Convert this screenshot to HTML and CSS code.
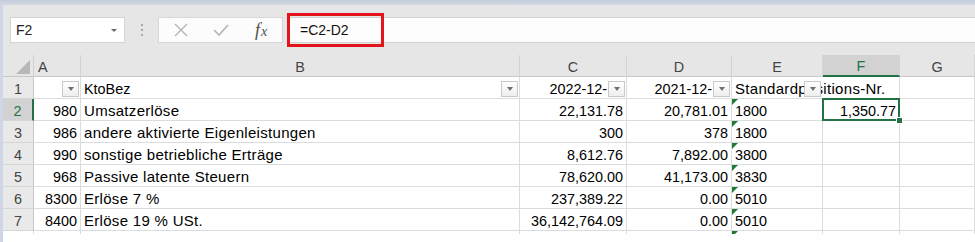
FILE: index.html
```html
<!DOCTYPE html>
<html lang="de">
<head>
    <meta charset="UTF-8">
    <title>Excel – Tabelle</title>
    <link rel="stylesheet" href="styles.css">
</head>
<body>
    <div class="app">
        <div class="top-strip"></div>
        <div class="main">
            <!-- Bearbeitungsleiste -->
            <div class="formula-row">
                <div class="name-box">
                    <span>F2</span>
                    <span class="caret"></span>
                </div>
                <div class="grip"><i></i><i></i><i></i></div>
                <div class="fx-buttons">
                    <svg class="btn-icon" width="16" height="16" viewBox="0 0 16 16">
                        <path d="M2 2 L14 14 M14 2 L2 14" stroke="#b4b4b4" stroke-width="1.4" fill="none"/>
                    </svg>
                    <svg class="btn-icon" width="16" height="16" viewBox="0 0 16 16">
                        <path d="M1 8 L6 13 L15 3" stroke="#b4b4b4" stroke-width="1.6" fill="none"/>
                    </svg>
                    <span class="fx"><i>f</i><i class="fx-x">x</i></span>
                </div>
                <div class="formula-input">
                    <span class="formula-text">=C2-D2</span>
                    <div class="highlight"></div>
                </div>
            </div>

            <!-- Tabellenblatt -->
            <div class="sheet">
                <div class="corner"><div class="corner-tri"></div></div>
                <div class="col-head col-a">A</div>
                <div class="col-head">B</div>
                <div class="col-head">C</div>
                <div class="col-head">D</div>
                <div class="col-head">E</div>
                <div class="col-head selected">F</div>
                <div class="col-head">G</div>

                <div class="row-head">1</div>
                <div class="c filter"><span class="drop"></span></div>
                <div class="c filter">KtoBez<span class="drop"></span></div>
                <div class="c filter r"><span class="clip">2022-12-</span><span class="drop"></span></div>
                <div class="c filter r"><span class="clip">2021-12-</span><span class="drop"></span></div>
                <div class="c filter spill txt">Standardpositions-Nr.<span class="drop"></span></div>
                <div class="c"></div>
                <div class="c"></div>

                <div class="row-head selected">2</div>
                <div class="c r">980</div>
                <div class="c txt">Umsatzerlöse</div>
                <div class="c r">22,131.78</div>
                <div class="c r">20,781.01</div>
                <div class="c flag">1800</div>
                <div class="c r active">1,350.77</div>
                <div class="c"></div>

                <div class="row-head">3</div>
                <div class="c r">986</div>
                <div class="c txt">andere aktivierte Eigenleistungen</div>
                <div class="c r">300</div>
                <div class="c r">378</div>
                <div class="c flag">1800</div>
                <div class="c"></div>
                <div class="c"></div>

                <div class="row-head">4</div>
                <div class="c r">990</div>
                <div class="c txt">sonstige betriebliche Erträge</div>
                <div class="c r">8,612.76</div>
                <div class="c r">7,892.00</div>
                <div class="c flag">3800</div>
                <div class="c"></div>
                <div class="c"></div>

                <div class="row-head">5</div>
                <div class="c r">968</div>
                <div class="c txt">Passive latente Steuern</div>
                <div class="c r">78,620.00</div>
                <div class="c r">41,173.00</div>
                <div class="c flag">3830</div>
                <div class="c"></div>
                <div class="c"></div>

                <div class="row-head">6</div>
                <div class="c r">8300</div>
                <div class="c txt">Erlöse 7 %</div>
                <div class="c r">237,389.22</div>
                <div class="c r">0.00</div>
                <div class="c flag">5010</div>
                <div class="c"></div>
                <div class="c"></div>

                <div class="row-head">7</div>
                <div class="c r">8400</div>
                <div class="c txt">Erlöse 19 % USt.</div>
                <div class="c r">36,142,764.09</div>
                <div class="c r">0.00</div>
                <div class="c flag">5010</div>
                <div class="c"></div>
                <div class="c"></div>

                <!-- angeschnittene Zeile 8 -->
                <div class="stub"></div>
                <div class="stub"></div>
                <div class="stub"></div>
                <div class="stub"></div>
                <div class="stub"></div>
                <div class="stub flag"></div>
                <div class="stub"></div>
                <div class="stub"></div>
            </div>
        </div>
    </div>
</body>
</html>
```

FILE: styles.css
```css
body {
    margin: 0;
    background: #ffffff;
    font-family: 'Liberation Sans', Arial, sans-serif;
}

.app {
    width: 975px;
    height: 242px;
    overflow: hidden;
    background: #ffffff;
}

.top-strip {
    height: 5px;
    background: linear-gradient(#c3ccdb, #d3d9e3);
}

.main {
    border-left: 3px solid #cfd7e6;
    height: 237px;
}

/* Bearbeitungsleiste */

.formula-row {
    display: flex;
    align-items: flex-start;
    box-sizing: border-box;
    height: 50px;
    padding-top: 12px;
    background: #e6e6e6;
}

.name-box {
    display: flex;
    align-items: center;
    justify-content: space-between;
    box-sizing: border-box;
    width: 115px;
    height: 26px;
    margin-left: 7px;
    padding: 0 7px 0 5px;
    background: #ffffff;
    border: 1px solid #d4d4d4;
    font-size: 14px;
    color: #222222;
}

.caret {
    width: 0;
    height: 0;
    border-left: 3px solid transparent;
    border-right: 3px solid transparent;
    border-top: 3px solid #6a6a6a;
}

.grip {
    display: flex;
    flex-direction: column;
    gap: 3px;
    margin: 7px 15px 0 16px;
}

.grip i {
    display: block;
    width: 2px;
    height: 2px;
    background: #a8a8a8;
}

.fx-buttons {
    display: flex;
    align-items: center;
    box-sizing: border-box;
    width: 125px;
    height: 26px;
    padding-left: 14px;
    gap: 24px;
    background: #fcfcfc;
    border: 1px solid #d6d6d6;
}

.btn-icon {
    display: block;
}

.fx {
    font-family: 'Liberation Serif', serif;
    font-size: 18px;
    color: #505050;
    margin-left: 2px;
}

.fx i {
    font-style: italic;
}

.fx-x {
    font-size: 14px;
    margin-left: 1px;
}

.formula-input {
    position: relative;
    flex: 1;
    display: flex;
    align-items: center;
    box-sizing: border-box;
    height: 26px;
    margin-left: 4px;
    padding-left: 13px;
    background: #fdfdfd;
    border-top: 1px solid #d2d2d2;
    border-bottom: 1px solid #d2d2d2;
    font-size: 14px;
    color: #111111;
}

/* rote Markierung ueber der Formel */
.highlight {
    position: absolute;
    left: 0;
    top: -5px;
    width: 97px;
    height: 34px;
    box-sizing: border-box;
    border: 3px solid #e3141c;
}

/* Tabellenblatt */

.sheet {
    display: grid;
    grid-template-columns: 31px 47px 439px 107px 105px 91px 77px 1fr;
    grid-template-rows: repeat(8, 22px) 3px;
    font-size: 14.4px;
    color: #000000;
}

.corner,
.col-head,
.row-head {
    box-sizing: border-box;
    background: #e6e6e6;
    color: #444444;
}

.corner {
    display: flex;
    align-items: flex-end;
    justify-content: flex-end;
    padding: 0 3px 2px 0;
    border-right: 1px solid #d0d0d0;
    border-bottom: 1px solid #c8c8c8;
}

.corner-tri {
    width: 14px;
    height: 14px;
    background: #b8b8b8;
    clip-path: polygon(100% 0, 100% 100%, 0 100%);
}

.col-head {
    display: flex;
    align-items: center;
    justify-content: center;
    padding-top: 2px;
    font-size: 14.4px;
    border-right: 1px solid #d3d3d3;
    border-bottom: 1px solid #c8c8c8;
}

.col-head.col-a {
    justify-content: flex-start;
    padding-left: 4px;
}

.col-head.selected {
    background: #d2d2d2;
    color: #217346;
    border-bottom: 2px solid #217346;
}

.row-head {
    display: flex;
    align-items: center;
    justify-content: center;
    padding-top: 2px;
    font-size: 14.4px;
    background: #e9e9e9;
    border-right: 1px solid #c8c8c8;
    border-bottom: 1px solid #d6d6d6;
}

.row-head.selected {
    background: #d2d2d2;
    color: #217346;
    border-right: 2px solid #217346;
}

.c {
    position: relative;
    display: flex;
    align-items: flex-end;
    box-sizing: border-box;
    padding: 0 3px;
    line-height: 18px;
    white-space: nowrap;
    overflow: hidden;
    border-right: 1px solid #dadcdd;
    border-bottom: 1px solid #dadcdd;
}

.c.txt {
    font-size: 15px;
    letter-spacing: 0.3px;
}

.c.r {
    justify-content: flex-end;
}

.c.filter.r {
    padding-right: 19px;
}

.c.spill {
    overflow: visible;
    border-right-color: transparent;
    z-index: 1;
}

.clip {
    overflow: hidden;
}

/* Filter-Schaltflaeche */
.drop {
    position: absolute;
    right: 1px;
    top: 4px;
    width: 17px;
    height: 16px;
    box-sizing: border-box;
    display: flex;
    align-items: center;
    justify-content: center;
    background: linear-gradient(#ffffff, #eeeeee);
    border: 1px solid #c9c9c9;
}

.drop::after {
    content: '';
    width: 0;
    height: 0;
    border-left: 3.5px solid transparent;
    border-right: 3.5px solid transparent;
    border-top: 4px solid #6f6f6f;
}

/* gruenes Dreieck: Zahl als Text */
.flag::before {
    content: '';
    position: absolute;
    left: 0;
    top: 0;
    border-top: 6px solid #1f7a34;
    border-right: 6px solid transparent;
}

.c.active {
    overflow: visible;
    z-index: 2;
}

.c.active::after {
    content: '';
    position: absolute;
    left: -1px;
    top: -1px;
    right: -1px;
    bottom: -1px;
    border: 2px solid #217346;
}

.c.active::before {
    content: '';
    position: absolute;
    right: -4px;
    bottom: -4px;
    width: 5px;
    height: 5px;
    background: #217346;
    border: 1px solid #ffffff;
    z-index: 3;
}

.stub {
    position: relative;
    box-sizing: border-box;
    border-right: 1px solid #dadcdd;
    overflow: hidden;
}
```
